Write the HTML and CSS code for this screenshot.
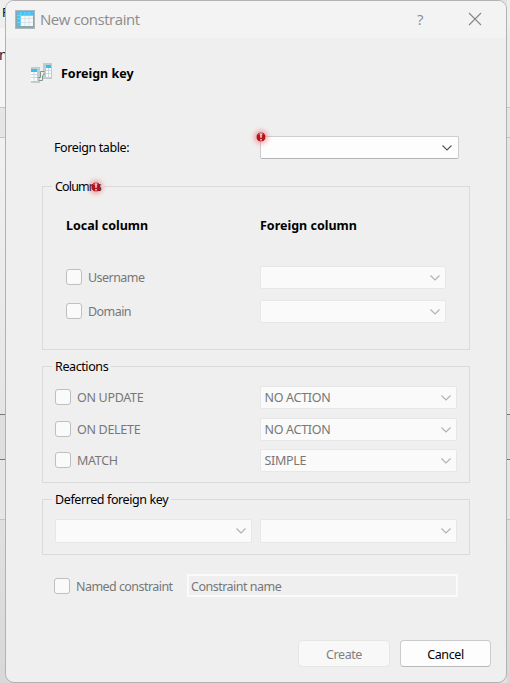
FILE: index.html
```html
<!DOCTYPE html>
<html lang="en">
<head>
<meta charset="utf-8">
<title>New constraint</title>
<link rel="stylesheet" href="styles.css">
</head>
<body>
<svg class="defs" width="0" height="0">
  <defs>
    <symbol id="chevron" viewBox="0 0 10 6"><path d="M.5 .5 5 5 9.500 .5" fill="none" stroke="currentColor" stroke-width="1.1"/></symbol>
    <symbol id="error" viewBox="0 0 10 10"><path d="M3 .5h4L9.500 3v4L7 9.500H3L.5 7V3z" fill="#b3161c"/><path d="M3 1h4v2H2z" fill="#d94b50"/><path d="M5 1.500v4.200M5 7v1.500" stroke="#fff" stroke-width="1.300"/></symbol>
  </defs>
</svg>
<div class="screen">
  <div class="strip left">
    <div class="s1"><span>F</span></div><div class="s2"><span>n</span></div><div class="s3"></div><div class="s4"></div><div class="s5"></div><div class="s6"></div><div class="s7"></div>
  </div>
  <div class="dialog">
    <header class="titlebar">
      <svg class="app-icon" width="20" height="19" viewBox="0 0 20 19">
        <rect x=".5" y=".5" width="19" height="18" fill="#8fa5ad" stroke="#a9b9bf"/>
        <rect x="2" y="2" width="16" height="14" fill="#f5f9fa"/>
        <path d="M2 2h16v3H2zM2 5h4v11H2z" fill="#45c4f5"/>
        <path d="M6 8.500h12M6 12.500h12M10 5v11M14 5v11" stroke="#dbe3e5"/>
        <path d="M2 5.500h16M5.500 2v14M2 8.500h4M2 12.500h4M10 2v3M14 2v3" stroke="#6fd2f8"/>
      </svg>
      <span class="title">New constraint</span>
      <span class="help">?</span>
      <svg class="close" width="14" height="14" viewBox="0 0 14 14"><path d="M1 1l12 12M13 1l-12 12" stroke="#858585" stroke-width="1.100"/></svg>
    </header>
    <div class="heading">
      <svg width="21" height="20" viewBox="0 0 21 20">
        <path d="M0 4h9v16H0z" fill="#c3cccc"/>
        <path d="M12 0h9v16h-9z" fill="#c3cccc"/>
        <path d="M0 6h6v12H0zM15 2h5v12h-5z" fill="#fbfdfd"/>
        <path d="M0 6h6v3H0zM15 2h5v3h-5z" fill="#36bef1"/>
        <path d="M0 11.500h6M0 14.500h6M3 9v9M15 7.500h5M15 10.500h5M17.500 5v9" stroke="#bcd3da" stroke-width=".8"/>
        <path d="M7 14.500h2.500V8.500h4M8 17.500h3.500v-5l2.500-2" fill="none" stroke="#849292"/>
      </svg>
      <h1>Foreign key</h1>
    </div>
    <div class="table-row">
      <label>Foreign table:</label>
      <div class="combo active"><svg class="badge"><use href="#error"/></svg><svg class="chev"><use href="#chevron"/></svg></div>
    </div>
    <fieldset class="columns">
      <legend>Columns<svg class="badge"><use href="#error"/></svg></legend>
      <div class="row head"><b>Local column</b><b>Foreign column</b></div>
      <div class="row"><label><i></i><span>Username</span></label><div class="combo"><svg class="chev"><use href="#chevron"/></svg></div></div>
      <div class="row"><label><i></i><span>Domain</span></label><div class="combo"><svg class="chev"><use href="#chevron"/></svg></div></div>
    </fieldset>
    <fieldset class="reactions">
      <legend>Reactions</legend>
      <div class="row"><label class="caps"><i></i><span>ON UPDATE</span></label><div class="combo caps"><span>NO ACTION</span><svg class="chev"><use href="#chevron"/></svg></div></div>
      <div class="row"><label class="caps"><i></i><span>ON DELETE</span></label><div class="combo caps"><span>NO ACTION</span><svg class="chev"><use href="#chevron"/></svg></div></div>
      <div class="row"><label class="caps"><i></i><span>MATCH</span></label><div class="combo caps"><span>SIMPLE</span><svg class="chev"><use href="#chevron"/></svg></div></div>
    </fieldset>
    <fieldset class="deferred">
      <legend>Deferred foreign key</legend>
      <div class="pair"><div class="combo"><svg class="chev"><use href="#chevron"/></svg></div><div class="combo"><svg class="chev"><use href="#chevron"/></svg></div></div>
    </fieldset>
    <div class="named"><label><i></i><span>Named constraint</span></label><div class="field">Constraint name</div></div>
    <footer><div class="button disabled">Create</div><div class="button">Cancel</div></footer>
  </div>
  <div class="strip right">
    <div class="s1"></div><div class="s2"></div><div class="s3"></div><div class="s4"></div><div class="s5"></div><div class="s6"></div><div class="s7"></div>
  </div>
</div>
</body>
</html>
```
FILE: styles.css
```css
* { box-sizing: border-box; }
body { margin: 0; background: #e2e2e2; font: 12.5px/17px "Noto Sans", sans-serif; letter-spacing: -0.4px; color: #000; overflow: hidden; }
.defs { position: absolute; }
.screen { display: grid; grid-template-columns: 5px 502px 3px; height: 683px; }
.strip { min-width: 0; }
.strip > div { border-bottom: 1px solid #c4c4c4; width: 20px; }
.right > div { width: 3px; }
.strip span { display: block; }
.strip .s1 { height: 28px; background: #eeeeee; border: 0; padding-top: 4px; }
.left .s1 span { margin-left: 2px; }
.strip .s2 { height: 80px; background: #f5f5f5; padding-top: 18px; }
.left .s2 span { margin-left: -1px; font-size: 14px; color: #124; }
.strip .s3 { height: 30px; background: #e6e6e6; }
.strip .s4 { height: 277px; background: linear-gradient(#f1f1f1, #e5e5e5); border-color: #777; }
.strip .s5 { height: 45px; background: #dedede; border-color: #777; }
.strip .s6 { height: 60px; background: #e6e6e6; }
.strip .s7 { height: 163px; background: linear-gradient(#e0e0e0, #d8d8d8); border: 0; }
.right .s2 { background: #ececec; }
.right .s4 { background: #e4e4e4; }
.dialog { position: relative; height: 683px; background: #efefef; border: 1px solid #b2b2b2; border-radius: 9px; overflow: hidden; }
.titlebar { height: 37px; background: #f3f3f3; display: flex; align-items: center; padding-left: 9px; color: #8c8c8c; }
.app-icon { margin-top: -1px; }
.title { font: 15px/20px "Open Sans", sans-serif; letter-spacing: -0.45px; margin: -2px 0 0 5px; width: 371px; }
.help { font: 15px/20px "Open Sans", sans-serif; width: 57px; padding-left: 5px; margin: -2px 0 0 1px; }
.help + .close { margin-left: -1px; }
.close { margin-top: -1px; }
.heading { display: flex; align-items: center; height: 20px; margin: 25px 0 0 25px; gap: 9px; }
h1, b { font-size: 12.5px; line-height: 17px; margin: 0; letter-spacing: 0; }
.table-row { display: flex; align-items: center; margin: 53px 0 0 48px; height: 23px; }
.table-row label { width: 206px; }
.combo { position: relative; width: 197px; height: 23px; background: #fafafa; border: 1px solid #e7e7e7; border-radius: 2px; display: flex; align-items: center; padding: 0 5px 0 3.5px; color: #777; }
.combo.active { width: 199px; background: #fdfdfd; border-color: #cdcdcd; border-bottom-color: #b3b3b3; color: #444; padding-right: 6px; }
.chev { width: 10px; height: 6px; margin-left: auto; color: #b0b0b0; }
.active .chev { color: #555; }
.badge { position: absolute; width: 10px; height: 10px; border-radius: 5px; box-shadow: 0 0 4px 2px #f46b7188; }
.active .badge { left: -5px; top: -5px; }
fieldset { margin: 0 0 8px 36px; padding: 0; width: 428px; border: 1px solid #dadada; min-width: 0; }
legend { position: relative; margin-left: 9px; padding: 0 3px; height: 17px; }
legend .badge { left: 39px; top: 4px; }
.columns legend { letter-spacing: -0.85px; }
.columns { margin-top: 19px; height: 172px; }
.reactions { height: 125px; }
.deferred { height: 64px; }
.row { display: grid; grid-template-columns: 194px 197px; align-items: center; height: 23px; }
.columns .row { margin: 0 0 11px 23px; }
.columns .row.head { margin: 19px 0 29px 23px; }
.columns .combo { width: 186px; }
.reactions .row { margin: 0 0 8px 12px; grid-template-columns: 205px 197px; }
.reactions legend + .row { margin-top: 11px; margin-bottom: 9px; }
.row label, .named label { display: flex; align-items: center; gap: 6px; color: #777; letter-spacing: -0.55px; }
label i { width: 16px; height: 16px; border: 1px solid #bfbfbf; border-radius: 3px; background: #fafafa; margin-top: -1px; }
.caps, .row label.caps { letter-spacing: -0.3px; }
.pair { display: flex; gap: 8px; margin: 11px 0 0 12px; }
.pair .combo { height: 24px; }
.named { display: flex; margin: 19px 0 0 48px; height: 23px; align-items: center; }
.named label { width: 133px; padding-top: 1px; }
.field { width: 271px; height: 23px; border: 2px solid #fafafa; color: #777; padding-left: 2px; line-height: 22px; letter-spacing: -0.5px; }
footer { display: flex; gap: 10px; justify-content: flex-end; margin: 43px 15px 0 0; }
.button { width: 91px; height: 27px; border: 1px solid #cbcbcb; border-bottom-color: #b8b8b8; border-radius: 4px; background: #fdfdfd; text-align: center; line-height: 27px; }
.disabled { width: 92px; background: #f8f8f8; border-color: #e6e6e6; color: #808080; }
```
